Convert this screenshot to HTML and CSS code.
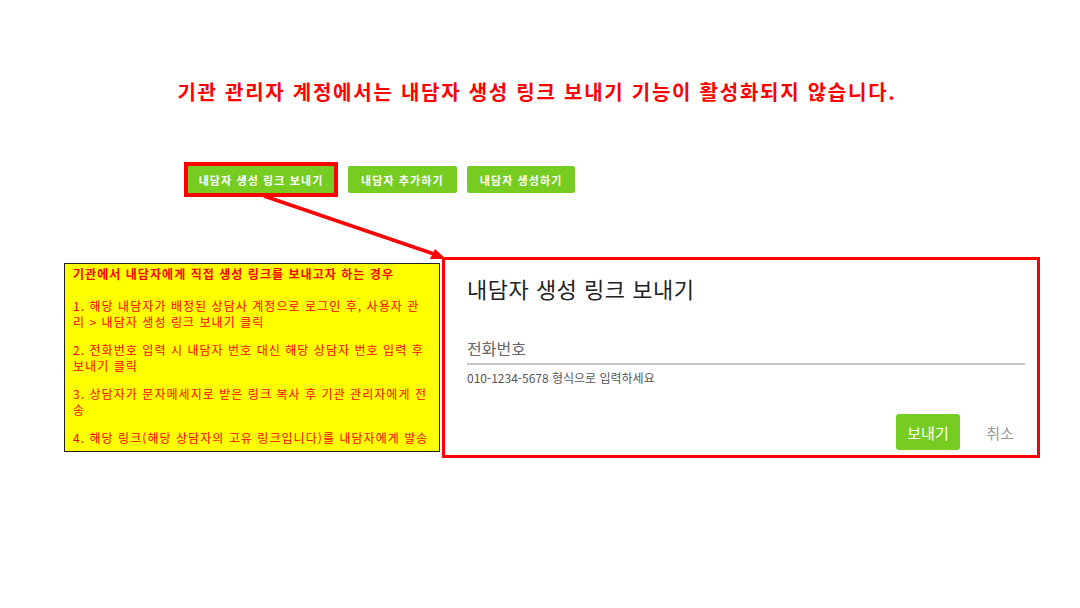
FILE: index.html
```html
<!DOCTYPE html>
<html lang="ko">
<head>
  <meta charset="UTF-8">
  <title>내담자 생성 링크 보내기</title>
  <link rel="stylesheet" href="styles.css">
</head>
<body>
  <div class="page">
    <h1 class="notice">기관 관리자 계정에서는 내담자 생성 링크 보내기 기능이 활성화되지 않습니다.</h1>

    <div class="toolbar">
      <button class="btn-green btn-mark">내담자 생성 링크 보내기</button>
      <button class="btn-green">내담자 추가하기</button>
      <button class="btn-green">내담자 생성하기</button>
    </div>

    <div class="content">
      <div class="memo">
        <p class="memo-title">기관에서 내담자에게 직접 생성 링크를 보내고자 하는 경우</p>
        <p>1. 해당 내담자가 배정된 상담사 계정으로 로그인 후, 사용자 관<br>리 &gt; 내담자 생성 링크 보내기 클릭</p>
        <p>2. 전화번호 입력 시 내담자 번호 대신 해당 상담자 번호 입력 후<br>보내기 클릭</p>
        <p>3. 상담자가 문자메세지로 받은 링크 복사 후 기관 관리자에게 전<br>송</p>
        <p>4. 해당 링크(해당 상담자의 고유 링크입니다)를 내담자에게 발송</p>
      </div>

      <div class="dialog">
        <h2 class="dialog-title">내담자 생성 링크 보내기</h2>
        <div class="field">
          <div class="field-input">전화번호</div>
          <div class="field-help">010-1234-5678 형식으로 입력하세요</div>
        </div>
        <div class="dialog-actions">
          <button class="btn-send">보내기</button>
          <button class="btn-cancel">취소</button>
        </div>
      </div>
    </div>

    <!-- 화살표 -->
    <svg class="arrow" width="1080" height="608" viewBox="0 0 1080 608">
      <line x1="264" y1="196" x2="434" y2="254" stroke="#ff0000" stroke-width="3.5"/>
      <polygon points="446,259 430,259 435,249" fill="#ff0000"/>
    </svg>
  </div>
</body>
</html>
```

FILE: styles.css
```css
body {
  margin: 0;
  padding: 0;
  background: #ffffff;
  font-family: "Noto Sans CJK KR", "Noto Sans", sans-serif;
}

.page {
  position: relative;
  width: 1080px;
  height: 608px;
  overflow: hidden;
}

.notice {
  margin: 0;
  padding-top: 80px;
  padding-right: 6px;
  text-align: center;
  color: #ff0000;
  font-size: 20px;
  line-height: 24px;
  font-weight: bold;
  letter-spacing: 1.75px;
}

.toolbar {
  display: flex;
  gap: 10px;
  margin-top: 62px;
  padding-left: 188px;
}

.btn-green {
  height: 27px;
  padding: 0 13px;
  border: none;
  border-radius: 2px;
  background-color: #77cc22;
  color: white;
  font-family: "Noto Sans CJK KR", sans-serif;
  font-size: 11px;
  font-weight: bold;
  letter-spacing: 1.1px;
  white-space: nowrap;
  cursor: pointer;
}

.btn-mark {
  width: 146px;
  padding: 0;
  margin-right: 4px;
  border-radius: 0;
  outline: 4px solid #ff0000;
}

.content {
  display: flex;
  align-items: flex-start;
  gap: 2px;
  margin-top: 64px;
  padding-left: 64px;
}

.memo {
  box-sizing: border-box;
  width: 376px;
  height: 189px;
  margin-top: 6px;
  padding: 2px 8px;
  border: 1px solid #222;
  background-color: #ffff00;
  color: #ff0000;
  font-size: 12px;
  line-height: 16px;
  letter-spacing: 1.05px;
  white-space: nowrap;
}

.memo p {
  margin: 0 0 12px;
}

.memo .memo-title {
  font-weight: bold;
  margin-bottom: 16px;
}

.dialog {
  box-sizing: border-box;
  width: 598px;
  height: 201px;
  padding: 14px 12px 0 22px;
  border: 3px solid #ff0000;
  background: white;
}

.dialog-title {
  margin: 0;
  font-size: 22px;
  line-height: 28px;
  font-weight: normal;
  letter-spacing: 0.5px;
  color: #222;
}

.field {
  margin-top: 36px;
}

.field-input {
  padding-bottom: 5px;
  border-bottom: 2px solid #c6c6c6;
  color: #666;
  font-size: 16px;
  line-height: 20px;
}

.field-help {
  margin-top: 5px;
  color: #555;
  font-size: 12px;
  line-height: 16px;
}

.dialog-actions {
  display: flex;
  justify-content: flex-end;
  gap: 8px;
  margin-top: 28px;
  margin-right: -7px;
}

.dialog-actions button {
  width: 64px;
  height: 36px;
  border: none;
  border-radius: 3px;
  font-family: "Noto Sans CJK KR", sans-serif;
  font-size: 15px;
  cursor: pointer;
}

.btn-send {
  background-color: #77cc22;
  color: white;
}

.btn-cancel {
  background: transparent;
  color: #999;
}

.arrow {
  position: absolute;
  top: 0;
  left: 0;
  pointer-events: none;
}
```
